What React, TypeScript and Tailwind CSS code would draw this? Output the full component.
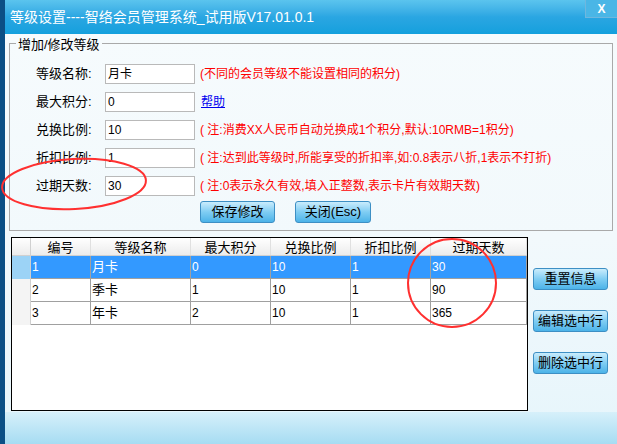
import React from "react";

const rows = [
  { id: "1", name: "月卡", max: "0", rate: "10", disc: "1", days: "30" },
  { id: "2", name: "季卡", max: "1", rate: "10", disc: "1", days: "90" },
  { id: "3", name: "年卡", max: "2", rate: "10", disc: "1", days: "365" },
];

const fields = [
  { label: "等级名称:", value: "月卡", note: "(不同的会员等级不能设置相同的积分)" },
  { label: "最大积分:", value: "0", link: "帮助" },
  { label: "兑换比例:", value: "10", note: "( 注:消费XX人民币自动兑换成1个积分,默认:10RMB=1积分)" },
  { label: "折扣比例:", value: "1", note: "( 注:达到此等级时,所能享受的折扣率,如:0.8表示八折,1表示不打折)" },
  { label: "过期天数:", value: "30", note: "( 注:0表示永久有效,填入正整数,表示卡片有效期天数)" },
];

const cols = ["w-[60px]", "w-[100px]", "w-[80px]", "w-[80px]", "w-[80px]", "flex-1"];
const heads = ["编号", "等级名称", "最大积分", "兑换比例", "折扣比例", "过期天数"];

function BlueButton({ children, className }: { children: React.ReactNode; className?: string }) {
  return (
    <button
      type="button"
      className={
        "h-[22px] rounded-[3px] border border-[#3d8fc4] bg-gradient-to-b from-[#c9ecfc] via-[#7fcdf3] to-[#4bb3e8] text-[13px] text-black " +
        (className ?? "")
      }
    >
      {children}
    </button>
  );
}

export default function App() {
  return (
    <div
      className="relative flex h-[444px] w-[617px] overflow-hidden bg-[#0e5c93] text-[12px]"
      style={{ fontFamily: '"Liberation Sans", "Noto Sans CJK SC", sans-serif' }}
    >
      <div className="w-[5px] bg-[#0b4f85]" />
      <div className="flex flex-1 flex-col">
        <div className="relative flex h-[34px] items-center bg-gradient-to-b from-[#5bc4ee] via-[#2aa6e2] to-[#13a0dd] pl-[5px] text-[14px] text-white">
          等级设置----智络会员管理系统_试用版V17.01.0.1
          <div className="absolute right-0 top-0 flex h-[18px] w-[32px] items-center justify-center border-b border-l border-[#6fb7de] bg-[#4ab6e6] text-[12px] font-bold text-white">
            X
          </div>
        </div>
        <div className="flex flex-1 flex-col bg-gradient-to-b from-[#f6fbfd] via-[#f2f9fc] to-[#e6f5fb]">
          <div className="relative mx-[4px] mt-[9px] h-[188px] border border-[#a9a9a9] pl-[26px] pt-[20px]">
            <div className="absolute left-[6px] top-[-9px] bg-[#f6fbfd] px-[2px] text-[13px] text-black">增加/修改等级</div>
            <div className="flex flex-col gap-[8px]">
              {fields.map((f) => (
                <div key={f.label} className="flex h-[20px] items-center">
                  <span className="w-[69px] text-[13px] text-black">{f.label}</span>
                  <div className="flex h-[20px] w-[90px] items-center border border-[#b9b9b9] bg-white pl-[2px] text-[12px]">
                    {f.value}
                  </div>
                  {f.note && <span className="ml-[5px] text-[12px] text-[#ff0000]">{f.note}</span>}
                  {f.link && <span className="ml-[6px] text-[12px] text-[#0000ee] underline">{f.link}</span>}
                </div>
              ))}
            </div>
            <div className="ml-[164px] mt-[5px] flex gap-[20px]">
              <BlueButton className="w-[75px]">保存修改</BlueButton>
              <BlueButton className="w-[76px]">关闭(Esc)</BlueButton>
            </div>
          </div>
          <div className="mt-[6px] flex">
            <div className="ml-[6px] h-[174px] w-[517px] border border-black bg-white">
              <div className="flex h-[18px] border-b border-[#d0d0d0] bg-gradient-to-b from-white to-[#ececec] text-[13px]">
                <div className="w-[19px] border-r border-[#d0d0d0]" />
                {heads.map((h, i) => (
                  <div key={h} className={cols[i] + " border-r border-[#e0e0e0] text-center"}>{h}</div>
                ))}
              </div>
              {rows.map((r, ri) => {
                const sel = ri === 0;
                const vals = [r.id, r.name, r.max, r.rate, r.disc, r.days];
                return (
                  <div key={r.id} className={"flex h-[23px] " + (sel ? "bg-[#3399ff] text-white" : "bg-white text-black")}>
                    <div className={"w-[19px] border-r border-[#d0d0d0] " + (sel ? "bg-[#9cd3f6]" : "bg-[#f4f4f4]")} />
                    {vals.map((v, i) => (
                      <div key={i} className={cols[i] + " flex items-center border-b border-r border-[#a0a0a0] pl-[1px] " + (i === 1 ? "text-[13px]" : "")}>
                        {v}
                      </div>
                    ))}
                  </div>
                );
              })}
            </div>
            <div className="ml-[5px] flex flex-col gap-[20px] pt-[31px]">
              <BlueButton className="w-[75px]">重置信息</BlueButton>
              <BlueButton className="w-[75px]">编辑选中行</BlueButton>
              <BlueButton className="w-[75px]">删除选中行</BlueButton>
            </div>
          </div>
          <div className="mt-auto h-[32px] bg-gradient-to-b from-[#d6f0fa] to-[#a6dcf2]" />
        </div>
      </div>
      <svg className="pointer-events-none absolute left-0 top-0" width="617" height="444">
        <ellipse cx="74" cy="184" rx="72" ry="25" transform="rotate(-3 74 184)" fill="none" stroke="#ff3030" strokeWidth="2" />
        <ellipse cx="452" cy="283" rx="44" ry="44" fill="none" stroke="#ff3030" strokeWidth="2" />
      </svg>
    </div>
  );
}
